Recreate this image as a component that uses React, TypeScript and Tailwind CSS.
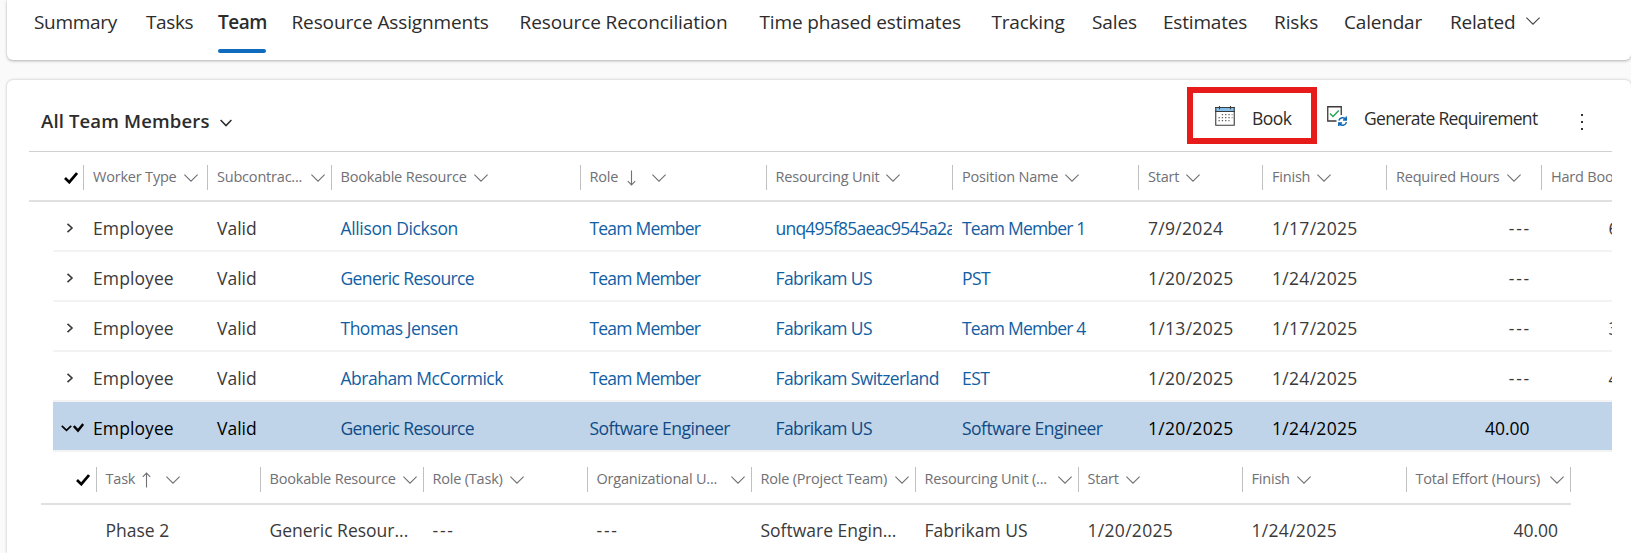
import React from "react";

function Chevron({ className }: { className?: string }) {
  return (
    <svg viewBox="0 0 14 8" fill="none" stroke="currentColor" strokeWidth="1.1" className={`h-2 w-3.5 shrink-0 ${className ?? ""}`}>
      <path d="M0.4 0.6 7 7.2 13.6 0.6" />
    </svg>
  );
}

function Check({ className }: { className: string }) {
  return (
    <svg viewBox="0 0 14 12" fill="none" stroke="currentColor" strokeWidth="2.7" className={`shrink-0 text-black ${className}`}>
      <path d="M1 6 5.3 10.2 13 1" />
    </svg>
  );
}

function SortArrow({ up }: { up?: boolean }) {
  return (
    <svg viewBox="0 0 9 16" fill="none" stroke="currentColor" strokeWidth="1.1" className={`h-4 w-[9px] shrink-0 ${up ? "rotate-180" : ""}`}>
      <path d="M4.5 0.5V15M0.8 11.2 4.5 14.9 8.2 11.2" />
    </svg>
  );
}

const tabs = [
  { label: "Summary", box: "w-[112px] tracking-[-0.3px]" },
  { label: "Tasks", box: "w-[72px] tracking-[-0.4px]" },
  { label: "Team", box: "w-[73.5px] tracking-[-0.5px]", active: true },
  { label: "Resource Assignments", box: "w-[228px] tracking-[-0.12px]" },
  { label: "Resource Reconciliation", box: "w-[240px] tracking-[-0.1px]" },
  { label: "Time phased estimates", box: "w-[232px] tracking-[-0.15px]" },
  { label: "Tracking", box: "w-[100.5px] tracking-[-0.2px]" },
  { label: "Sales", box: "w-[71px] tracking-[-0.1px]" },
  { label: "Estimates", box: "w-[111px] tracking-[-0.2px]" },
  { label: "Risks", box: "w-[70px] tracking-[-0.1px]" },
  { label: "Calendar", box: "w-[106px] tracking-[-0.2px]" },
  { label: "Related", box: "w-[76px] tracking-[-0.2px]" },
];

type Column = { label: string; width: string; sort?: "up" | "down"; spread?: boolean; right?: boolean };

const columns: Column[] = [
  { label: "Worker Type", width: "w-[124px]" },
  { label: "Subcontrac...", width: "w-[123.5px]", spread: true },
  { label: "Bookable Resource", width: "w-[249px]" },
  { label: "Role", width: "w-[186px]", sort: "down" },
  { label: "Resourcing Unit", width: "w-[186.5px]" },
  { label: "Position Name", width: "w-[186px]" },
  { label: "Start", width: "w-[124px]" },
  { label: "Finish", width: "w-[124px]" },
  { label: "Required Hours", width: "w-[155px]", right: true },
  { label: "Hard Booked", width: "w-[155px]", right: true },
];

const rows = [
  ["Employee", "Valid", "Allison Dickson", "Team Member", "unq495f85aeac9545a2ae", "Team Member 1", "7/9/2024", "1/17/2025", "---", "6"],
  ["Employee", "Valid", "Generic Resource", "Team Member", "Fabrikam US", "PST", "1/20/2025", "1/24/2025", "---", ""],
  ["Employee", "Valid", "Thomas Jensen", "Team Member", "Fabrikam US", "Team Member 4", "1/13/2025", "1/17/2025", "---", "3"],
  ["Employee", "Valid", "Abraham McCormick", "Team Member", "Fabrikam Switzerland", "EST", "1/20/2025", "1/24/2025", "---", "4"],
  ["Employee", "Valid", "Generic Resource", "Software Engineer", "Fabrikam US", "Software Engineer", "1/20/2025", "1/24/2025", "40.00", ""],
];

const taskColumns: Column[] = [
  { label: "Task", width: "w-[164px]", sort: "up" },
  { label: "Bookable Resource", width: "w-[163px]", spread: true },
  { label: "Role (Task)", width: "w-[164px]" },
  { label: "Organizational U...", width: "w-[164px]", spread: true },
  { label: "Role (Project Team)", width: "w-[164px]", spread: true },
  { label: "Resourcing Unit (...", width: "w-[163px]", spread: true },
  { label: "Start", width: "w-[164px]" },
  { label: "Finish", width: "w-[164px]" },
  { label: "Total Effort (Hours)", width: "w-[164px]", spread: true, right: true },
];

const taskRow = ["Phase 2", "Generic Resour...", "---", "---", "Software Engin...", "Fabrikam US", "1/20/2025", "1/24/2025", "40.00"];

function valueTracking(value: string) {
  if (value === "---") return "tracking-[1.8px]";
  if (value.includes("/")) return "tracking-[0.3px]";
  if (value === "Employee") return "tracking-[0.1px]";
  return "tracking-[0px]";
}

function linkTracking(value: string) {
  if (value.startsWith("Team")) return "tracking-[-0.8px]";
  if (value.startsWith("Allison")) return "tracking-[-0.35px]";
  if (value.startsWith("unq")) return "tracking-[-0.78px]";
  if (value.startsWith("Fabrikam") || value.startsWith("Generic")) return "tracking-[-0.6px]";
  return "tracking-[-0.5px]";
}

function HeaderCell({ column }: { column: Column }) {
  return (
    <div className={`flex h-[25px] shrink-0 items-center border-l border-[#c0c0c0] pl-[9px] ${column.width} ${column.spread ? "justify-between pr-1.5" : "gap-[7px]"}`}>
      <span className="pb-px text-[14.5px] tracking-[-0.2px]">{column.label}</span>
      {column.sort && <span className={`flex ${column.sort === "up" ? "mr-2" : "mr-[9px] ml-0.5"}`}><SortArrow up={column.sort === "up"} /></span>}
      <Chevron />
    </div>
  );
}

export default function App() {
  return (
    <div className="flex h-[553px] w-[1631px] flex-col gap-5 overflow-hidden bg-[#fafafa] pl-[7px] font-['Open_Sans','Noto_Sans',sans-serif] whitespace-nowrap text-[#2c2c2c]">
      <nav className="flex h-[60px] shrink-0 rounded-b-md bg-white pl-[27px] text-[19px] shadow-[0_1px_3px_rgba(0,0,0,0.3)]">
        {tabs.map((tab) => (
          <div key={tab.label} className={`flex shrink-0 flex-col ${tab.box}`}>
            <span className={`h-[49px] pt-[9px] leading-[26px] ${tab.active ? "font-semibold" : ""}`}>{tab.label}</span>
            {tab.active && <span className="h-1 w-12 rounded-full bg-[#0f6cbd]" />}
          </div>
        ))}
        <Chevron className="mt-[17px] text-[#424242]" />
      </nav>

      <section className="h-[473px] shrink-0 rounded-t-md bg-white pr-[20px] pl-[22px] shadow-[0_0_3px_rgba(0,0,0,0.25)]">
        <div className="flex h-[71px] items-start justify-between pl-3">
          <div className="flex items-center gap-2.5 pt-[27px] text-[18.5px] leading-7 font-semibold tracking-[0.15px]">
            All Team Members
            <svg viewBox="0 0 12 8" fill="none" stroke="currentColor" strokeWidth="1.5" className="mt-1 h-2 w-3">
              <path d="M0.6 1 6 6.6 11.4 1" />
            </svg>
          </div>
          <div className="flex pt-[7px] text-[17.5px] tracking-[-0.68px]">
            <button className="flex h-[57px] w-[130px] items-center border-[6px] border-[#e81b1b] pl-[22px]">
              <svg viewBox="0 0 20 20" className="h-5 w-5 shrink-0">
                <path d="M0.5 2H19.5V5H0.5Z" fill="#83beec" />
                <path d="M0.75 1.5V19.25H19.25V1.5M0 5.5H20M0 1.5H20M4.5 0V3.2M15.5 0V3.2" fill="none" stroke="#3b3a39" strokeWidth="1.1" />
                <path d="M6.8 8.7H17.5M3.5 11.7H17.5M3.5 14.7H14.5" stroke="#605e5c" strokeWidth="1.2" strokeDasharray="1.3 2" />
              </svg>
              <span className="pt-[6px] pl-[17px] tracking-[-0.5px]">Book</span>
            </button>
            <button className="flex h-[57px] w-[222px] items-center pl-2.5">
              <svg viewBox="0 0 20 20" fill="none" className="h-5 w-5 shrink-0">
                <path d="M9.5 15H0.75V0.75H14.25V9" stroke="#3b3a39" strokeWidth="1.3" />
                <path d="M3 7.5 6 10.5 11.8 4.5" stroke="#27a65a" strokeWidth="1.5" />
                <path d="M11.8 14.5A4 4 0 0 1 19 13.5M19.3 10.5V14H16M19.5 16.2A4 4 0 0 1 12.3 17.5M11.8 20.2V17H15" stroke="#1068b5" strokeWidth="1.5" />
              </svg>
              <span className="pt-[6px] pl-[17px]">Generate Requirement</span>
            </button>
            <span className="flex w-[72px] flex-col items-end gap-[5px] pt-[27px] pr-7">
              <i className="h-0.5 w-0.5 bg-[#333]" />
              <i className="h-0.5 w-0.5 bg-[#333]" />
              <i className="h-0.5 w-0.5 bg-[#333]" />
            </span>
          </div>
        </div>

        <div className="w-[1583px] overflow-hidden border-t border-[#d1d1d1]">
          <div className="flex h-[50px] items-start border-b-2 border-[#e0e0e0] pt-[13px] text-[#707075]">
            <div className="flex h-[25px] w-[54px] shrink-0 items-center pl-[35px]"><Check className="h-3 w-3.5" /></div>
            {columns.map((column) => <HeaderCell key={column.label} column={column} />)}
          </div>

          {rows.map((row, index) => {
            const selected = index === 4;
            return (
              <div key={index} className={`ml-6 flex h-[50px] items-center overflow-hidden border-b-2 border-[#f3f3f3] pt-[3px] ${selected ? "bg-[#bfd4e8] text-black" : "text-[#3a3a3a]"}`}>
                <div className={`flex w-[30px] shrink-0 items-center ${selected ? "pl-2" : "pl-[13px]"}`}>
                  {selected ? (
                    <svg viewBox="0 0 11 7" fill="none" stroke="currentColor" strokeWidth="1.7" className="mt-0.5 h-[7px] w-[11px] shrink-0">
                      <path d="M0.8 0.8 5.5 5.4 10.2 0.8" />
                    </svg>
                  ) : (
                    <svg viewBox="0 0 8 10" fill="none" stroke="currentColor" strokeWidth="1.6" className="h-2.5 w-2">
                      <path d="M1.5 0.8 6 5 1.5 9.2" />
                    </svg>
                  )}
                  {selected && (
                    <svg viewBox="0 0 11 10" fill="none" stroke="currentColor" strokeWidth="2.4" className="ml-px h-2.5 w-[11px] shrink-0">
                      <path d="M0.8 3 5 7.6 10.2 1" />
                    </svg>
                  )}
                </div>
                {row.map((value, col) => {
                  const link = col >= 2 && col <= 5;
                  return (
                    <div key={col} className={`shrink-0 overflow-hidden text-[17.5px] leading-8 ${columns[col].width} ${link ? `pl-2.5 ${linkTracking(value)}` : valueTracking(value)} ${link ? (selected ? "text-[#0f4a85]" : "text-[#115ea3]") : ""} ${col === 8 ? (value === "---" ? "pr-2.5 text-right" : "pr-[11.5px] text-right") : col === 9 ? "pl-[67.5px]" : "pl-2.5"}`}>
                      {value}
                    </div>
                  );
                })}
              </div>
            );
          })}
        </div>

        <div className="ml-3 w-[1530px] text-[#707075]">
          <div className="flex h-[53px] items-start border-b-2 border-[#e0e0e0] pt-[15px]">
            <div className="flex h-[25px] w-[54.5px] shrink-0 items-center pl-[35px]"><Check className="h-3 w-3.5" /></div>
            {taskColumns.map((column) => <HeaderCell key={column.label} column={column} />)}
            <div className="h-[25px] w-px shrink-0 bg-[#c0c0c0]" />
          </div>
          <div className="flex h-12 items-center pt-0.5 pl-[54.5px] text-[17.5px] text-[#3a3a3a]">
            {taskRow.map((value, col) => (
              <div key={col} className={`shrink-0 overflow-hidden leading-8 ${valueTracking(value)} ${taskColumns[col].width} ${taskColumns[col].right ? "pr-[11.5px] text-right" : "pl-2.5"}`}>{value}</div>
            ))}
          </div>
        </div>
      </section>
    </div>
  );
}
